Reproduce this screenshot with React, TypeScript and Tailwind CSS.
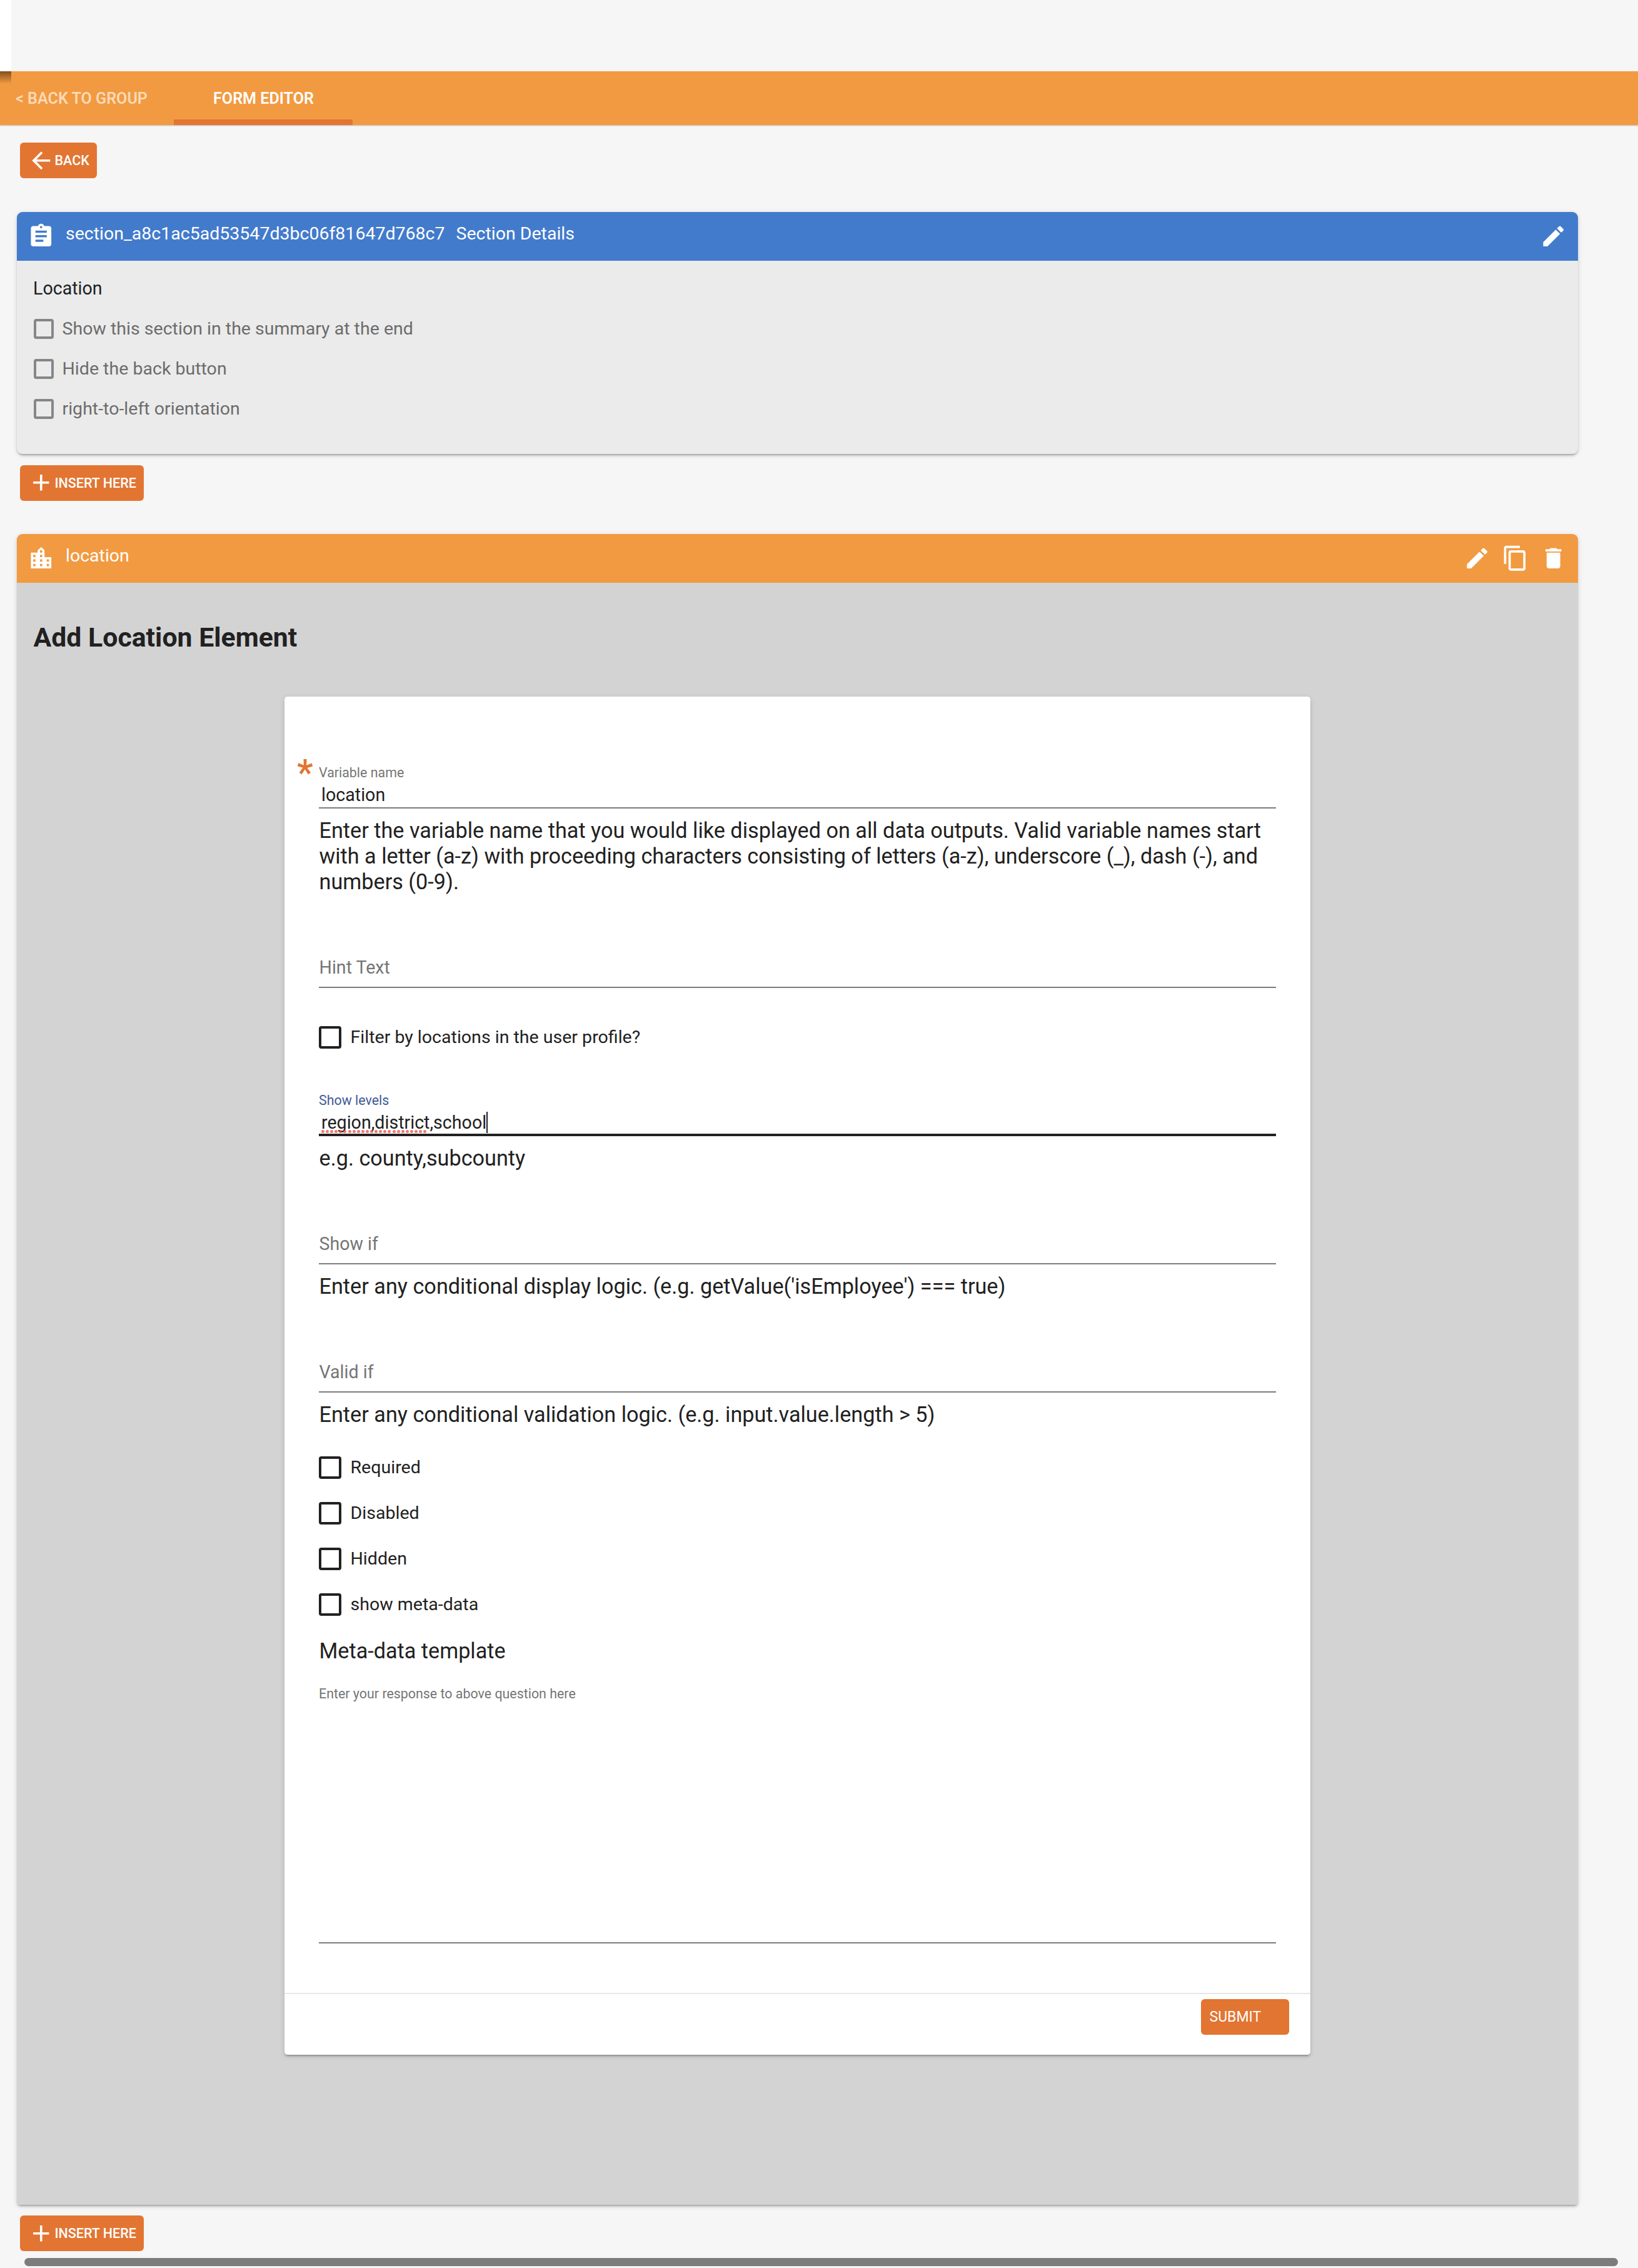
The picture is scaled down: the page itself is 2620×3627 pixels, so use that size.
import type { ReactNode } from "react";

const ICONS = {
  arrowBack: "M20 11H7.83l5.59-5.59L12 4l-8 8 8 8 1.41-1.41L7.83 13H20v-2z",
  add: "M19 13h-6v6h-2v-6H5v-2h6V5h2v6h6v2z",
  assignment:
    "M19 3h-4.18C14.4 1.84 13.3 1 12 1c-1.3 0-2.4.84-2.82 2H5c-1.1 0-2 .9-2 2v14c0 1.1.9 2 2 2h14c1.1 0 2-.9 2-2V5c0-1.1-.9-2-2-2zm-7 0c.55 0 1 .45 1 1s-.45 1-1 1-1-.45-1-1 .45-1 1-1zm2 14H7v-2h7v2zm3-4H7v-2h10v2zm0-4H7V7h10v2z",
  locationCity:
    "M15 11V5l-3-3-3 3v2H3v14h18V11h-6zm-8 8H5v-2h2v2zm0-4H5v-2h2v2zm0-4H5V9h2v2zm6 8h-2v-2h2v2zm0-4h-2v-2h2v2zm0-4h-2V9h2v2zm0-4h-2V5h2v2zm6 12h-2v-2h2v2zm0-4h-2v-2h2v2z",
  edit: "M3 17.25V21h3.75L17.81 9.94l-3.75-3.75L3 17.25zM20.71 7.04c.39-.39.39-1.02 0-1.41l-2.34-2.34c-.39-.39-1.02-.39-1.41 0l-1.83 1.83 3.75 3.75 1.83-1.83z",
  copy: "M16 1H4c-1.1 0-2 .9-2 2v14h2V3h12V1zm3 4H8c-1.1 0-2 .9-2 2v14c0 1.1.9 2 2 2h11c1.1 0 2-.9 2-2V7c0-1.1-.9-2-2-2zm0 16H8V7h11v14z",
  trash: "M6 19c0 1.1.9 2 2 2h8c1.1 0 2-.9 2-2V7H6v12zM19 4h-3.5l-1-1h-5l-1 1H5v2h14V4z",
};

function Icon({ name }: { name: keyof typeof ICONS }) {
  return (
    <svg viewBox="0 0 24 24" className="size-[43.5px] shrink-0 fill-current">
      <path d={ICONS[name]} />
    </svg>
  );
}

function ActionButton({ icon, children }: { icon: keyof typeof ICONS; children: ReactNode }) {
  return (
    <button className="ml-[32px] flex h-[57px] shrink-0 items-center self-start rounded-[6px] bg-[#e27532] pr-[12px] pl-[12px] text-[21.5px] font-medium whitespace-nowrap text-white">
      <Icon name={icon} />
      <span className="pt-[2px]">{children}</span>
    </button>
  );
}

const CARD_SHADOW =
  "shadow-[0_5px_2px_-4px_rgba(0,0,0,0.2),0_3px_3px_0_rgba(0,0,0,0.14),0_2px_9px_0_rgba(0,0,0,0.12)]";

function CardHeader({ icon, actions, color, children }: { icon: keyof typeof ICONS; actions: (keyof typeof ICONS)[]; color: string; children: ReactNode }) {
  return (
    <header className={`flex h-[78px] shrink-0 items-center rounded-t-[9px] pr-[18px] pl-[17px] text-white ${color}`}>
      <Icon name={icon} />
      <div className="flex flex-1 gap-[18px] pb-[8px] pl-[17.5px] text-[28.5px] leading-[40px]">{children}</div>
      <div className="flex gap-[17.5px]">
        {actions.map((a) => (
          <Icon key={a} name={a} />
        ))}
      </div>
    </header>
  );
}

function DisabledCheck({ label }: { label: string }) {
  return (
    <label className="flex h-[64px] items-center text-[28.55px] text-[#6c6c6c]">
      <span className="ml-[0.5px] size-[32px] rounded-[4px] border-4 border-[#868686]" />
      <span className="pl-[14px] leading-[40px]">{label}</span>
    </label>
  );
}

function Check({ label }: { label: string }) {
  return (
    <label className="flex h-[73px] items-center text-[28.55px]">
      <span className="-ml-[0.5px] size-[36px] rounded-[4px] border-4 border-[#212121]" />
      <span className="pl-[15px] leading-[39px]">{label}</span>
    </label>
  );
}

function EmptyField({ label }: { label: string }) {
  return (
    <div className="h-[53px] border-b-2 border-[#7c7c7c] pl-[0.5px] leading-[40px] text-[#757575]">{label}</div>
  );
}

function Help({ children }: { children: ReactNode }) {
  return <p className="-mb-px pt-[15px] pl-[0.5px] text-[34.23px] leading-[41px]">{children}</p>;
}

export default function App() {
  return (
    <div className="flex h-[3627px] w-[2620px] flex-col overflow-hidden bg-[#f6f6f6] font-['Roboto',sans-serif] text-[28.6px] text-[#212121]">
      <div className="h-[114px] w-[18px] shrink-0 bg-white" />
      <nav className="relative flex h-[86px] shrink-0 bg-[#f29a41] text-[25.1px] font-semibold shadow-[0_1px_2px_rgba(0,0,0,0.25)]">
        <div className="absolute top-0 left-0 h-[20px] w-[18px] bg-linear-to-b from-[rgba(70,40,10,0.65)] to-transparent" />
        <div className="flex w-[278px] items-center pt-[2px] pl-[25px] text-[#fbd9b6]">&lt; BACK TO GROUP</div>
        <div className="flex w-[286px] items-center justify-center border-b-[9px] border-[#e27532] pt-[11px] pl-px text-white">
          FORM EDITOR
        </div>
      </nav>

      <div className="flex shrink-0 flex-col pt-[28px]">
        <ActionButton icon="arrowBack">BACK</ActionButton>
      </div>

      <section className={`mt-[54px] ml-[27px] flex h-[387px] w-[2497px] shrink-0 flex-col rounded-[9px] bg-[#ebebeb] ${CARD_SHADOW}`}>
        <CardHeader icon="assignment" actions={["edit"]} color="bg-[#437bcc]">
          <span>section_a8c1ac5ad53547d3bc06f81647d768c7</span>
          <span>Section Details</span>
        </CardHeader>
        <div className="pt-[24px] pl-[26px]">
          <div className="leading-[40px]">Location</div>
          <div className="pt-[13px]">
            <DisabledCheck label="Show this section in the summary at the end" />
            <DisabledCheck label="Hide the back button" />
            <DisabledCheck label="right-to-left orientation" />
          </div>
        </div>
      </section>

      <div className="flex shrink-0 flex-col pt-[17.5px]">
        <ActionButton icon="add">INSERT HERE</ActionButton>
      </div>

      <section className={`mt-[53.5px] ml-[27px] flex h-[2671.5px] w-[2497px] shrink-0 flex-col rounded-t-[9px] rounded-b-[5px] bg-[#d3d3d3] ${CARD_SHADOW}`}>
        <CardHeader icon="locationCity" actions={["edit", "copy", "trash"]} color="bg-[#f29a41]">
          <span>location</span>
        </CardHeader>
        <h2 className="pt-[57px] pl-[26.5px] text-[42.8px] leading-[60px] font-bold">Add Location Element</h2>

        <div className={`mt-[65px] ml-[428px] flex w-[1641px] flex-col rounded-[5px] bg-white ${CARD_SHADOW}`}>
          <form className="flex h-[2073px] flex-col px-[55px] pt-[106px]">
            <div className="relative text-[21.4px] leading-[31px] text-[#757575]">
              <span className="absolute top-[-14px] left-[-35px] text-[57px] leading-[60px] font-semibold text-[#e27532]">*</span>
              Variable name
            </div>
            <div className="h-[42px] border-b-2 border-[#7c7c7c] pl-[4px] leading-[40px]">location</div>
            <Help>
              Enter the variable name that you would like displayed on all data outputs. Valid variable names start
              with a letter (a-z) with proceeding characters consisting of letters (a-z), underscore (_), dash (-), and
              numbers (0-9).
            </Help>

            <div className="mt-[97px]">
              <EmptyField label="Hint Text" />
            </div>

            <div className="mt-[42px]">
              <Check label="Filter by locations in the user profile?" />
            </div>

            <div className="mt-[49px] text-[21.4px] leading-[31px] text-[#3f5a94]">Show levels</div>
            <div className="flex h-[42px] items-start border-b-4 border-[#212121] pl-[4px] leading-[40px]">
              <span className="relative">
                region,district,school
                <span className="absolute top-[32px] left-0 flex gap-[2.1px]">
                  {Array.from({ length: 24 }, (_, i) => (
                    <span key={i} className="size-[5px] rounded-full bg-[#ee4a42]/75" />
                  ))}
                </span>
              </span>
              <span className="mt-[3px] h-[34px] w-[2px] bg-[#212121]" />
            </div>
            <Help>e.g. county,subcounty</Help>

            <div className="mt-[97px]">
              <EmptyField label="Show if" />
              <Help>Enter any conditional display logic. (e.g. getValue('isEmployee') === true)</Help>
            </div>

            <div className="mt-[97px]">
              <EmptyField label="Valid if" />
              <Help>Enter any conditional validation logic. (e.g. input.value.length &gt; 5)</Help>
            </div>

            <div className="mt-[28px]">
              <Check label="Required" />
              <Check label="Disabled" />
              <Check label="Hidden" />
              <Check label="show meta-data" />
            </div>

            <div className="mt-[18px] pl-[0.5px] text-[34.2px] leading-[41px]">Meta-data template</div>
            <div className="mt-[32px] h-[415px] border-b-2 border-[#7c7c7c] text-[21.4px] leading-[31px] text-[#757575]">
              Enter your response to above question here
            </div>
          </form>
          <footer className="flex h-[99px] items-start justify-end border-t-2 border-[#e6e6e6] pt-[8px] pr-[34px]">
            <button className="h-[57px] w-[141px] rounded-[6px] bg-[#e27532] pt-[2px] pl-[13.5px] text-left text-[23px] text-white">
              SUBMIT
            </button>
          </footer>
        </div>
      </section>

      <div className="flex shrink-0 flex-col pt-[17.5px]">
        <ActionButton icon="add">INSERT HERE</ActionButton>
      </div>
      <div className="mt-[11px] ml-[39px] h-[12.5px] w-[2549px] shrink-0 rounded-full bg-[#7c7c7c]" />
    </div>
  );
}
